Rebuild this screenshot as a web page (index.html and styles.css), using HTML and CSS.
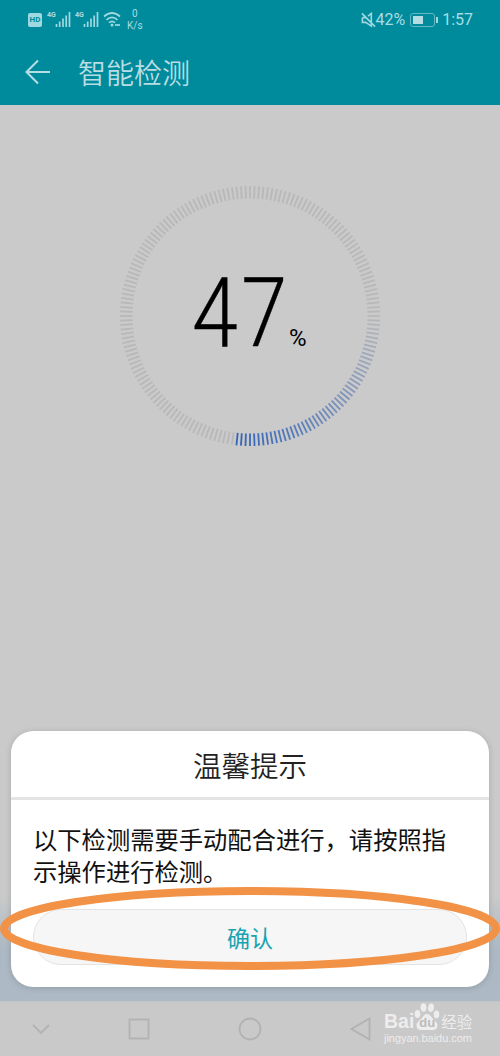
FILE: index.html
```html
<!DOCTYPE html>
<html lang="zh-CN">
<head>
    <meta charset="UTF-8">
    <meta name="viewport" content="width=device-width, initial-scale=1.0">
    <title>智能检测</title>
    <link rel="stylesheet" href="styles.css">
</head>
<body>
    <header>
        <div class="status-bar">
            <div class="status-left">
                <span class="hd">HD</span>
                <span class="signal">
                    <small>4G</small>
                    <svg width="16" height="15" viewBox="0 0 16 15"><path d="M1.500 12v3M4.700 9.500V15M8 6.500V15M11.200 3.500V15M14.500 0v15"/></svg>
                </span>
                <span class="signal">
                    <small>4G</small>
                    <svg width="16" height="15" viewBox="0 0 16 15"><path d="M1.500 12v3M4.700 9.500V15M8 6.500V15M11.200 3.500V15M14.500 0v15"/></svg>
                </span>
                <svg class="wifi" width="18" height="15" viewBox="0 0 18 15">
                    <path d="M1 4.500Q9-2.500 17 4.500M3.500 7.800Q9 2.800 14.500 7.800M6 10.700Q9 8 12 10.700"/>
                    <circle cx="9" cy="13" r="1.5"/>
                    <path d="M12 13h5"/>
                </svg>
                <span class="speed"><span>0</span><span>K/s</span></span>
            </div>
            <div class="status-right">
                <svg class="mute" width="15" height="16" viewBox="0 0 16 16"><path d="M1.500 5.500v5H5l6 4V1L7.500 3.800M1 1l14 14M1.500 5.500H5"/></svg>
                <span>42%</span>
                <span class="battery"><span class="battery-level"></span></span>
                <span class="time">1:57</span>
            </div>
        </div>
        <div class="title-bar">
            <svg width="26" height="26" viewBox="0 0 26 26"><path d="M25 13H1.500M13 1.500L1.500 13L13 24.500"/></svg>
            <h1>智能检测</h1>
        </div>
    </header>
    <main>
        <div class="progress">
            <svg id="ring" class="ring" width="264" height="264" viewBox="-132 -132 264 264"></svg>
            <div class="value"><span class="number">47</span><span class="percent">%</span></div>
        </div>
    </main>
    <nav>
        <svg width="20" height="20" viewBox="0 0 20 20"><path d="M2 6l8 8 8-8"/></svg>
        <svg width="22" height="22" viewBox="0 0 22 22"><rect x="1.500" y="1.500" width="19" height="19"/></svg>
        <svg width="24" height="24" viewBox="0 0 24 24"><circle cx="12" cy="12" r="10.500"/></svg>
        <svg width="22" height="24" viewBox="0 0 22 24"><path d="M19.500 1.500v21L1.500 12z"/></svg>
    </nav>

    <!-- Boîte de dialogue -->
    <section class="dialog">
        <h2>温馨提示</h2>
        <p>以下检测需要手动配合进行，请按照指示操作进行检测。</p>
        <button>确认</button>
    </section>

    <svg class="marker" width="500" height="84" viewBox="0 0 500 84"><ellipse cx="250" cy="41.500" rx="246" ry="37.500"/></svg>

    <div class="watermark">
        <div class="brand">
            <span>Bai</span>
            <span class="paw">
                <svg width="26" height="27" viewBox="0 0 26 27">
                    <ellipse cx="3.500" cy="11" rx="2.800" ry="4"/>
                    <ellipse cx="9.500" cy="4.500" rx="2.900" ry="4.200"/>
                    <ellipse cx="17" cy="4.700" rx="2.900" ry="4.200" transform="rotate(8 17 5)"/>
                    <ellipse cx="22.500" cy="11.400" rx="2.800" ry="4"/>
                    <path d="M13 11c3 0 4 2.500 6 5 2 2.400 4.500 3.500 4.500 6.500S21.500 27 18.500 27h-11C4.500 27 2.500 25.500 2.500 22.500S5 18.400 7 16c2-2.500 3-5 6-5z"/>
                </svg>
                <b>du</b>
            </span>
            <span class="cn">经验</span>
        </div>
        <div class="site">jingyan.baidu.com</div>
    </div>
    <script src="ring.js"></script>
</body>
</html>
```
FILE: styles.css
```css
* {
    box-sizing: border-box;
}

body {
    margin: 0;
    height: 1056px;
    display: flex;
    flex-direction: column;
    position: relative;
    overflow: hidden;
    background-color: #cacaca;
    font-family: Roboto, "Noto Sans CJK SC", sans-serif;
}

svg {
    display: block;
    fill: none;
    flex: none;
}

header {
    height: 105px;
    background-color: #008b9c;
    color: #a9dde3;
}

/* Barre d'état */
.status-bar {
    height: 39px;
    padding: 0 27px 0 28px;
    display: flex;
    justify-content: space-between;
    align-items: center;
}

.status-left,
.status-right {
    display: flex;
    align-items: center;
}

.status-bar svg {
    stroke: #9fd8df;
    stroke-width: 1.7;
}

.hd {
    width: 14px;
    height: 14px;
    border-radius: 2px;
    background-color: #9fd8df;
    color: #008b9c;
    font: bold 8px/14px Roboto, sans-serif;
    text-align: center;
    margin-right: 5px;
}

.signal {
    display: flex;
    align-items: flex-start;
    margin-right: 4px;
}

.signal small {
    width: 8px;
    font: bold 7px/7px Roboto, sans-serif;
}

.wifi circle {
    fill: #9fd8df;
    stroke: none;
}

.speed {
    display: flex;
    flex-direction: column;
    align-items: center;
    margin-left: 6px;
    font-size: 10px;
    line-height: 12px;
}

.status-right {
    font-size: 16px;
}

.mute {
    margin-right: -1px;
}

.battery {
    position: relative;
    width: 25px;
    height: 14px;
    margin: 0 7px 0 5px;
    padding: 2px;
    border: 1px solid #62b8c3;
    border-radius: 3px;
}

.battery::after {
    content: "";
    position: absolute;
    right: -4px;
    top: 3px;
    width: 2px;
    height: 6px;
    background-color: #9fd8df;
}

.battery-level {
    display: block;
    width: 10px;
    height: 8px;
    background-color: #b4dce2;
}

.title-bar {
    height: 66px;
    padding-left: 25px;
    display: flex;
    align-items: center;
    gap: 27px;
}

.title-bar svg {
    stroke: #b9dde2;
    stroke-width: 2;
}

.title-bar h1 {
    margin: 0;
    padding-top: 5px;
    font-size: 28px;
    font-weight: 350;
    line-height: 40px;
    color: #b9dde2;
}

/* Cercle de progression */
main {
    flex: 1;
    padding-top: 79px;
    background: linear-gradient(#cacaca 0, #cacaca 790px, #acb8c3 845px, #adbac5 100%);
}

.progress {
    width: 264px;
    height: 264px;
    margin: 0 auto;
    display: grid;
}

.ring,
.value {
    grid-area: 1 / 1;
}

.ring line {
    stroke-width: 1.8;
}

.value {
    display: flex;
    align-items: baseline;
    padding: 79px 0 0 74px;
    color: #000;
}

.number {
    width: 97px;
    font-family: Roboto, sans-serif;
    font-size: 96px;
    font-weight: 300;
    line-height: 100px;
    letter-spacing: 4px;
    transform: scaleX(0.86);
    transform-origin: left;
    -webkit-text-stroke: 0.4px #000;
}

.percent {
    font-size: 24px;
}

nav {
    height: 55px;
    display: grid;
    grid-template-columns: 82px 113px 110px 112px;
    justify-items: center;
    align-items: center;
    background-color: #c9c9c9;
    border-top: 1px solid #c0c4c7;
}

nav svg {
    stroke: #b2b2b2;
    stroke-width: 1.8;
}

/* Boîte de dialogue */
.dialog {
    position: absolute;
    left: 11px;
    right: 11px;
    top: 731px;
    height: 256px;
    display: flex;
    flex-direction: column;
    border-radius: 22px;
    background-color: #fff;
    box-shadow: 0 1px 6px rgba(0, 0, 0, 0.16);
}

.dialog h2 {
    margin: 0;
    height: 69px;
    padding-top: 2px;
    border-bottom: 3px solid #e4e4e4;
    font-size: 28.5px;
    font-weight: 350;
    line-height: 69px;
    text-align: center;
    color: #222;
}

.dialog p {
    margin: 25px 22px 0;
    font-size: 24.3px;
    line-height: 32px;
    color: #111;
}

.dialog button {
    height: 56px;
    margin: 20px 22px 0;
    border: 1px solid #e3e3e3;
    border-radius: 28px;
    background-color: #f6f6f6;
    color: #18a3b1;
    font: 23px "Noto Sans CJK SC", sans-serif;
}

.marker {
    position: absolute;
    left: 0;
    top: 887px;
    stroke: #f29247;
    stroke-width: 8;
}

/* Filigrane */
.watermark {
    position: absolute;
    left: 384px;
    top: 1003px;
    color: #ededed;
}

.brand {
    display: flex;
    align-items: flex-end;
    height: 27px;
    font: bold 19.5px/18px "Liberation Sans", sans-serif;
}

.paw {
    position: relative;
}

.paw svg {
    fill: #ededed;
}

.paw b {
    position: absolute;
    left: 5px;
    top: 13px;
    font-size: 13px;
    line-height: 14px;
    color: #bbb;
}

.brand .cn {
    margin-left: 1px;
    font: 15.5px/17px "Noto Sans CJK SC", sans-serif;
}

.site {
    margin-top: 1px;
    font: 10.9px/14px "Liberation Sans", sans-serif;
}
```
FILE: ring.js
```js
let ring = document.getElementById('ring');
let tickCount = 180;
let firstActive = 0;
let lastActive = 48;

// mélange deux couleurs rgb
function mix(a, b, t) {
    return 'rgb(' + a.map((v, i) => Math.round(v + (b[i] - v) * t)).join(',') + ')';
}

for (let i = 0; i < tickCount; i++) {
    let tick = document.createElementNS('http://www.w3.org/2000/svg', 'line');
    tick.setAttribute('x1', 117.5);
    tick.setAttribute('x2', 130);
    tick.setAttribute('transform', 'rotate(' + i * 2 + ')');
    let t = 0;
    if (i >= firstActive && i <= lastActive) {
        t = (i - firstActive) / (lastActive - firstActive);
    }
    tick.setAttribute('stroke', mix([184, 184, 186], [50, 100, 185], t));
    ring.appendChild(tick);
}
```
